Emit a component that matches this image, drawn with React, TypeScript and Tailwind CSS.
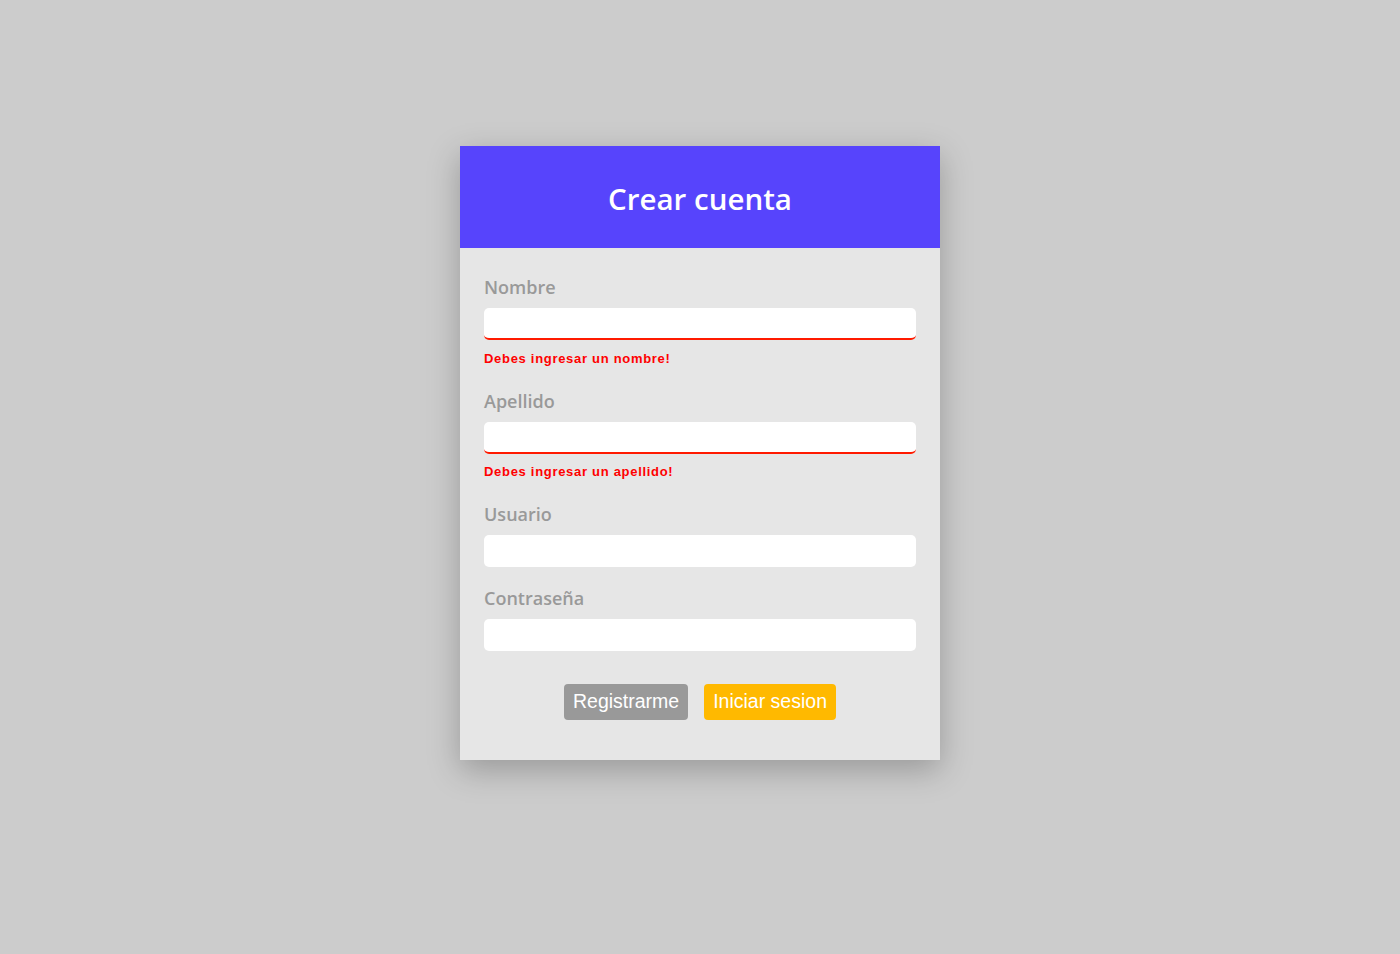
import { useState } from "react";

const fields = [
  { label: "Nombre", error: "Debes ingresar un nombre!" },
  { label: "Apellido", error: "Debes ingresar un apellido!" },
  { label: "Usuario", error: "" },
  { label: "Contraseña", error: "" },
];

export default function App() {
  const [values, setValues] = useState<Record<string, string>>({});

  return (
    <main className="min-h-screen bg-[#cccccc] pt-[146px] font-['Open_Sans',sans-serif]">
      <div className="mx-auto w-[480px] shadow-[0_10px_30px_rgba(0,0,0,0.25)]">
        <div className="flex h-[102px] items-center justify-center bg-[#5744fc] pt-1">
          <h1 className="text-[29.5px] font-semibold text-white">Crear cuenta</h1>
        </div>
        <form className="bg-[#e6e6e6] px-6 pt-[27px] pb-10" onSubmit={e => e.preventDefault()}>
          {fields.map((f, i) => (
            <div key={f.label} className={i === 0 ? "" : f.error || fields[i - 1].error ? "mt-[22px]" : "mt-[19px]"}>
              <label className="block h-[25px] text-[18px] leading-[25px] font-semibold text-[#999999]">
                {f.label}
              </label>
              <input
                type={f.label === "Contraseña" ? "password" : "text"}
                value={values[f.label] ?? ""}
                onChange={e => setValues({ ...values, [f.label]: e.target.value })}
                className={
                  "mt-2 block h-8 w-full rounded-[5px] bg-white px-2 outline-none " +
                  (f.error ? "border-b-2 border-[#ff1a00]" : "")
                }
              />
              {f.error && (
                <p className="mt-[10.5px] h-4 font-['Liberation_Sans',sans-serif] text-[13px] leading-4 font-bold tracking-[0.7px] text-[#ff0000]">
                  {f.error}
                </p>
              )}
            </div>
          ))}
          <div className="mt-[33px] flex justify-center gap-4 font-['Liberation_Sans',sans-serif]">
            <button className="h-9 rounded-[4px] bg-[#999999] px-[9px] text-[19.5px] text-white">Registrarme</button>
            <button className="h-9 rounded-[4px] bg-[#ffb900] px-[9px] text-[19.5px] text-white">Iniciar sesion</button>
          </div>
        </form>
      </div>
    </main>
  );
}
